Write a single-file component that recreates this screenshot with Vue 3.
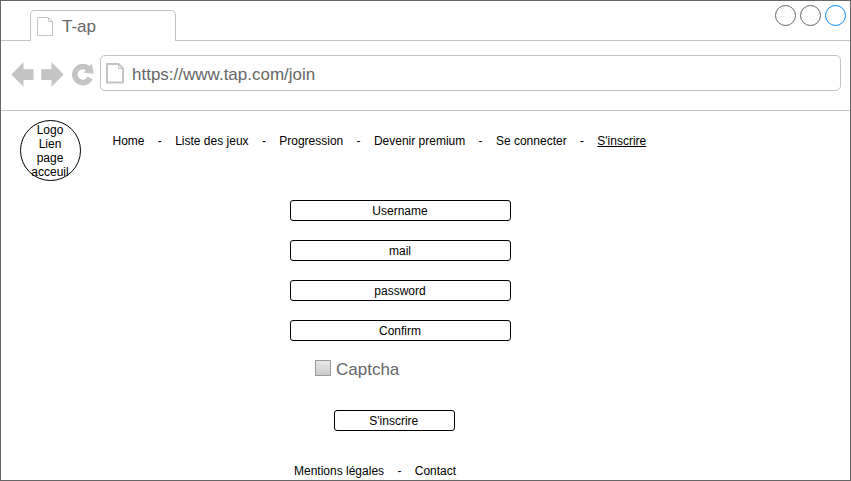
<script setup>
const links = ['Home', 'Liste des jeux', 'Progression', 'Devenir premium', 'Se connecter', "S'inscrire"]
const fields = ['Username', 'mail', 'password', 'Confirm']
</script>

<template>
  <div class="window">
    <div class="tabs">
      <div class="edge"></div>
      <div class="tab">
        <svg class="doc" width="17" height="20" viewBox="0 0 17 20">
          <path d="M.5.5H11.5L15.5 4.5V18.5H.5ZM11.5.5V4.5H15.5" />
        </svg>
        <span>T-ap</span>
      </div>
      <div class="rest">
        <svg width="73" height="23" viewBox="0 0 73 23" fill="none">
          <circle cx="11.5" cy="11.5" r="10" stroke="#666" />
          <circle cx="36.5" cy="11.5" r="10" stroke="#666" />
          <circle cx="61.5" cy="11.5" r="10" stroke="#008cff" />
        </svg>
      </div>
    </div>
    <div class="toolbar">
      <svg class="controls" width="84" height="26" viewBox="0 0 84 26">
        <path d="M.3 12.5L12.5 .3V7.3H22.5V18H12.5V24.7Z" />
        <path d="M52.7 12.5L40.5 .3V7.3H30.3V18H40.5V24.7Z" />
        <path d="M78.5 4.1L81 2L82.5 11.8L72.2 10.8L75 8.4A5.2 5.2 0 1 0 76.6 14.6L81.6 17.2A10.8 10.8 0 1 1 78.5 4.1Z" />
      </svg>
      <div class="address">
        <svg class="doc thick" width="19" height="22" viewBox="0 0 19 22">
          <path d="M1 1H12.5L17 5.5V19.5H1Z" />
          <path class="fold" d="M12.5 1V5.5H17" />
        </svg>
        <span>https://www.tap.com/join</span>
      </div>
    </div>
    <header>
      <a class="logo">Logo<br>Lien<br>page<br>acceuil</a>
      <nav>
        <template v-for="(link, i) in links" :key="link">
          <span v-if="i" class="sep">-</span><a :class="{ current: i === 5 }">{{ link }}</a>
        </template>
      </nav>
    </header>
    <main>
      <div v-for="field in fields" :key="field" class="field">{{ field }}</div>
      <div class="captcha"><span class="box"></span><span>Captcha</span></div>
      <div class="submit">S'inscrire</div>
    </main>
    <footer><a>Mentions légales</a><span class="sep">-</span><a>Contact</a></footer>
  </div>
</template>

<style>
body { margin: 0; background: #fff; overflow: hidden; }
</style>

<style scoped>
.window {
  box-sizing: border-box;
  width: 851px;
  height: 481px;
  border: 1px solid #666;
  background: #fff;
  overflow: hidden;
  font: 12px/14px "Liberation Sans", Arial, sans-serif;
  color: #000;
}
.tabs { display: flex; height: 40px; }
.edge { box-sizing: border-box; width: 29px; border-bottom: 1px solid #c4c4c4; }
.tab {
  box-sizing: border-box;
  display: flex;
  width: 146px;
  margin-top: 9px;
  padding: 6px 0 0 6px;
  border: 1px solid #c4c4c4;
  border-bottom: 0;
  border-radius: 5px 5px 0 0;
  color: #666;
  font-size: 17px;
  line-height: 20px;
}
.tab span { margin-left: 8px; }
.doc { flex: none; fill: none; stroke: #c4c4c4; }
.thick { stroke-width: 2; }
.fold { stroke-width: 1; }
.rest {
  box-sizing: border-box;
  flex: 1;
  display: flex;
  justify-content: flex-end;
  padding: 3px 3px 0 0;
  border-bottom: 1px solid #c4c4c4;
}
.toolbar {
  box-sizing: border-box;
  display: flex;
  height: 70px;
  padding: 14px 9px 0 10px;
  border-bottom: 1px solid #c4c4c4;
}
.controls { flex: none; margin-top: 7px; fill: #c4c4c4; }
.address {
  box-sizing: border-box;
  flex: 1;
  height: 36px;
  margin-left: 5px;
  display: flex;
  padding: 7px 0 0 5px;
  border: 1px solid #c4c4c4;
  border-radius: 5px;
  color: #666;
  font-size: 17px;
  line-height: 20px;
}
.address span { margin: 2px 0 0 7px; }
header { display: flex; padding: 9px 0 0 19px; }
.logo {
  box-sizing: border-box;
  width: 61px;
  height: 61px;
  padding: 2px 1px 0 0;
  border: 1px solid #000;
  border-radius: 50%;
  text-align: center;
}
nav { display: flex; margin: 14px 0 0 31.5px; white-space: nowrap; }
.sep { margin: 0 13.34px; }
.current { text-decoration: underline; }
main { padding: 19px 0 0 289px; }
.field, .submit {
  box-sizing: border-box;
  height: 21px;
  padding: 3px 1px 0 0;
  border: 1px solid #000;
  border-radius: 3px;
  text-align: center;
}
.field { width: 221px; margin-bottom: 19px; }
.captcha {
  display: flex;
  height: 20px;
  margin-left: 25px;
  color: #666;
  font-size: 17px;
  line-height: 20px;
}
.box {
  box-sizing: border-box;
  width: 16px;
  height: 16px;
  margin-right: 5px;
  border: 1px solid #999;
  background: linear-gradient(#e8e8e8, #ccc);
}
.submit { width: 120.5px; margin: 30px 0 0 44px; }
footer { display: flex; margin: 33px 0 0 293px; }
</style>
